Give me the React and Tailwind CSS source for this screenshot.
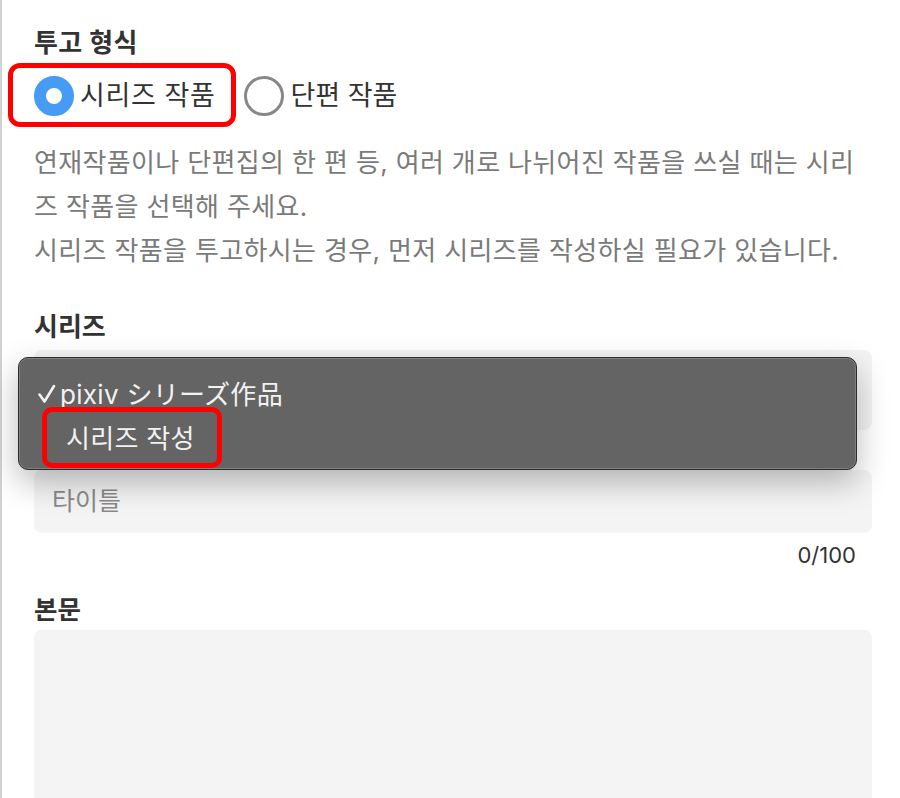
import { useState } from 'react';

const FONT = "font-['Inter','Noto_Sans_CJK_KR','Noto_Sans_CJK_JP',sans-serif]";

// Round radio with the filled-ring look
function Radio({ checked }) {
  return checked ? (
    <span className="w-10 h-10 rounded-full border-[12px] border-[#469bf4] bg-white flex-shrink-0" />
  ) : (
    <span className="w-10 h-10 rounded-full border-[3px] border-[#888] bg-white flex-shrink-0" />
  );
}

function Check() {
  return (
    <svg width="18" height="20" viewBox="0 0 18 20" className="flex-shrink-0">
      <path d="M1.5 10.5 L6.5 17.5 L16 2" fill="none" stroke="#f2f2f2" strokeWidth="2.6" strokeLinecap="round" strokeLinejoin="round" />
    </svg>
  );
}

// Native-style popup list of the series select
function SeriesMenu() {
  return (
    <div className="absolute left-[-16px] top-[7px] w-[839px] h-[113px] rounded-[10px] border border-[#2c2c2c] bg-[#646464] shadow-[0_12px_32px_rgba(0,0,0,0.28),inset_0_0_0_1px_rgba(255,255,255,0.18)] pt-[14px] text-[#f2f2f2] text-[26px] tracking-[0.3px]">
      <div className="h-[44px] flex items-center pl-[19px] gap-[4px]">
        <Check />
        <span>pixiv シリーズ作品</span>
      </div>
      <div className="relative h-[44px] flex items-center pl-[47px]">
        <span>시리즈 작성</span>
        {/* highlight frame */}
        <span className="absolute left-[23px] top-[-9px] w-[180px] h-[61px] rounded-[10px] border-[5px] border-[#ff0000]" />
      </div>
    </div>
  );
}

export default function App() {
  const [kind, setKind] = useState('series');

  return (
    <div className={`min-h-screen bg-white border-l-2 border-[#d2d2d2] pl-[32px] pr-[28px] pt-[26px] ${FONT}`}>
      <h3 className="text-[26px] leading-[34px] font-bold text-[#333] tracking-[0.4px]">투고 형식</h3>

      <div className="mt-[16px] flex items-center h-10 text-[27px] tracking-[0.6px] text-[#333]">
        <label className="relative flex items-center gap-[6px] cursor-pointer" onClick={() => setKind('series')}>
          <Radio checked={kind === 'series'} />
          <span>시리즈 작품</span>
          <span className="absolute left-[-26px] top-[-13px] w-[228px] h-[64px] rounded-[12px] border-[5px] border-[#ff0000]" />
        </label>
        <label className="ml-[29px] flex items-center gap-[6px] cursor-pointer" onClick={() => setKind('single')}>
          <Radio checked={kind === 'single'} />
          <span className="tracking-[0px]">단편 작품</span>
        </label>
      </div>

      <div className="mt-[25px] text-[26px] leading-[44px] tracking-[0.35px] text-[#7a7a7a]">
        <p>연재작품이나 단편집의 한 편 등, 여러 개로 나뉘어진 작품을 쓰실 때는 시리즈 작품을 선택해 주세요.</p>
        <p>시리즈 작품을 투고하시는 경우, 먼저 시리즈를 작성하실 필요가 있습니다.</p>
      </div>

      <h3 className="mt-[37px] text-[26px] leading-[34px] font-bold text-[#333]">시리즈</h3>
      <div className="relative mt-[6px]">
        <div className="h-[80px] rounded-lg bg-[#f4f4f4]" />
        <SeriesMenu />
      </div>

      <div className="mt-[40px] h-[63px] rounded-lg bg-[#f4f4f4] flex items-center px-[18px] text-[25px] text-[#8a8a8a]">
        타이틀
      </div>
      <div className="mt-[7px] h-[30px] text-right pr-[16px] text-[22px] leading-[30px] text-[#333]">0/100</div>

      <h3 className="mt-[23px] text-[25.5px] leading-[34px] font-bold text-[#333]">본문</h3>
      <div className="mt-[3px] h-[300px] rounded-lg bg-[#f4f4f4]" />
    </div>
  );
}
